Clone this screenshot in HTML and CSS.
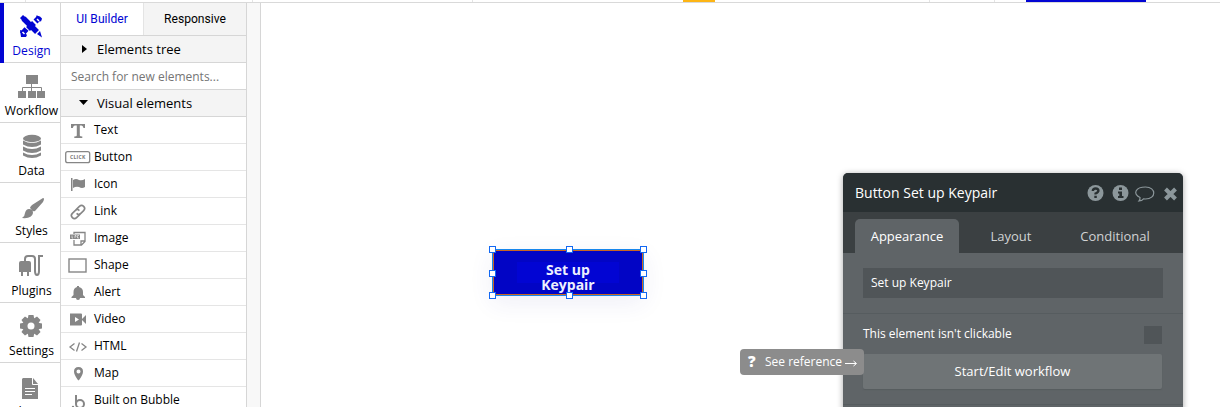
FILE: index.html
```html
<!DOCTYPE html>
<html lang="en">
<head>
<meta charset="utf-8">
<title>Editor</title>
<link rel="stylesheet" href="styles.css">
</head>
<body>
<header class="topbar"><i class="tick t1"></i><i class="tick t2"></i><i class="tick t3"></i><i class="mark orange"></i><i class="tick t4"></i><i class="tick t5"></i><i class="mark blue"></i></header>
<main class="editor">
  <nav class="sidebar">
    <div class="nav-item active"><svg width="60" height="36" viewBox="0 0 60 36"><path stroke="#0205d3" stroke-width="5.500" d="M23.500 15.500L37 29"/><path fill="#0205d3" d="M20 15l3-3 4 3.500-3.500 3.500zM37 31l3-3 2 6.500z"/><path stroke="#0205d3" stroke-width="5.500" d="M39.500 14.500l-4 4M34 20l-6 6M26.500 26l-4.500 5"/><path fill="#0205d3" d="M20 27l3 1 4 4-1 2h-5zM36 12.500l4 1 2 2-1 3-3-1z"/><path stroke="#fff" stroke-width="1.500" d="M22.500 29l2 2M37 16l2 2"/></svg><span>Design</span></div>
    <div class="nav-item"><svg width="60" height="36" viewBox="0 0 60 36"><path fill="#868686" d="M26 12h12v9H26zM18 28h8v7h-8zM28 28h8v7h-8zM37 28h8v7h-8z"/><path fill="none" stroke="#868686" d="M31.500 20v8M22.500 28v-3.500h19V28"/></svg><span>Workflow</span></div>
    <div class="nav-item"><svg width="60" height="36" viewBox="0 0 60 36"><g fill="#868686"><ellipse cx="32" cy="15.500" rx="9" ry="3.700"/><path d="M23 17.500q9 5 18 0v4q-9 5-18 0zM23 23.500q9 5 18 0v4q-9 5-18 0zM23 29.500q9 5 18 0v3q-9 5-18 0z"/></g></svg><span>Data</span></div>
    <div class="nav-item"><svg width="60" height="36" viewBox="0 0 60 36"><path fill="#868686" d="M43 15q2 0 0 4l-8 9q-2 1-3-1l-2-2q0-1 2-3zM29 26q4 0 4 4-1 6-11 5 3-2 3-5 1-4 4-4z"/></svg><span>Styles</span></div>
    <div class="nav-item"><svg width="60" height="36" viewBox="0 0 60 36"><path fill="#868686" d="M19 20q0-2 2-2h8q2 0 2 2v9H19zM21 29h2v4h-2zM27 29h2v4h-2z"/><path fill="none" stroke="#868686" stroke-width="2" d="M25 19v-3q0-3 3-3h4q3 0 3 3v12q0 4 2 4t2-4V13h4"/></svg><span>Plugins</span></div>
    <div class="nav-item"><svg width="60" height="36" viewBox="0 0 60 36"><g transform="translate(31 23)"><g fill="#868686"><circle r="8"/><path d="M-2.500-11h5l1 5h-7zM-2.500 11h5l1-5h-7zM-11-2.500v5l5 1v-7zM11-2.500v5l-5 1v-7z"/><path transform="rotate(45)" d="M-2.500-11h5l1 5h-7zM-2.500 11h5l1-5h-7zM-11-2.500v5l5 1v-7zM11-2.500v5l-5 1v-7z"/></g><circle r="3.500" fill="#fff"/></g></svg><span>Settings</span></div>
    <div class="nav-item"><svg width="60" height="36" viewBox="0 0 60 36"><path fill="#868686" d="M23 15h10l5 6v16H22V16z"/><path fill="none" stroke="#fff" d="M32.500 15v6.500H38M25 25.500h10M25 28.500h10M25 31.500h7"/></svg><span>Logs</span></div>
  </nav>
  <aside class="palette">
    <div class="tabs"><div class="tab on">UI Builder</div><div class="tab">Responsive</div></div>
    <div class="section"><svg class="tri" width="6" height="10"><path d="M0 1l5 4-5 4z"/></svg>Elements tree</div>
    <div class="search">Search for new elements...</div>
    <div class="section"><svg class="tri down" width="9" height="6"><path d="M0 0h9L4.500 5z"/></svg>Visual elements</div>
    <div class="row"><svg viewBox="0 0 34 26"><path fill="#868686" d="M10 7h14v4h-1.500q-.5-2.300-2-2.500h-1.700v10q0 1 2.500 1V21h-8v-1.500q2.500 0 2.500-1v-10h-2q-1.500.2-2 2.500H10z"/></svg>Text</div>
    <div class="row"><svg viewBox="0 0 34 26"><rect x="4.700" y="7.700" width="24" height="11" rx="2" fill="none" stroke="#868686" stroke-width="1.300"/><text class="click" x="16.800" y="15.400" text-anchor="middle">CLICK</text></svg>Button</div>
    <div class="row"><svg viewBox="0 0 34 26"><path fill="#868686" d="M10 7h1.500v13H10zM12 9q3-2 6 0 3 1 6-1v8q-3 2-6 0-3-1-6 1z"/></svg>Icon</div>
    <div class="row"><svg viewBox="0 0 34 26"><g transform="rotate(-45 17 14)" fill="none" stroke="#868686" stroke-width="1.600"><path d="M17 17h-5q-3 0-3-3t3-3h4q3 0 3 3"/><path d="M17 11h5q3 0 3 3t-3 3h-4q-3 0-3-3"/></g></svg>Link</div>
    <div class="row"><svg viewBox="0 0 34 26"><path fill="none" stroke="#868686" stroke-width="1.300" d="M13 9V7.500h11v9L20.500 20H13v-5M24 16h-4v4"/><path fill="#868686" d="M9 9.500h10V14H9z"/><path stroke="#fff" stroke-width=".6" fill="none" d="M11 10.500V13h1M14 13v-2.500h1V12M18 10.500h-1.500V13H18"/></svg>Image</div>
    <div class="row"><svg viewBox="0 0 34 26"><rect x="8" y="7" width="17" height="13" fill="none" stroke="#868686" stroke-width="1.400"/></svg>Shape</div>
    <div class="row"><svg viewBox="0 0 34 26"><path fill="#868686" d="M16 7h2v1q4 1 4 5v3l2 2v1H10.500v-1l2-2v-3q0-4 3.500-5zM15 19h4q0 2-2 2t-2-2z"/></svg>Alert</div>
    <div class="row"><svg viewBox="0 0 34 26"><path fill="#868686" d="M9 7.500h11q1 0 1 1v10q0 1-1 1H9zM21 13l4-4v9l-4-4z"/><path fill="#fff" d="M14 11l4 2.500-4 2.500z"/></svg>Video</div>
    <div class="row"><svg viewBox="0 0 34 26"><path fill="none" stroke="#868686" stroke-width="1.300" d="M13.500 10.500L9 14l4.500 3.500M20.500 10.500L25 14l-4.500 3.500M18.500 9.500l-3 9"/></svg>HTML</div>
    <div class="row"><svg viewBox="0 0 34 26"><path fill="#868686" fill-rule="evenodd" d="M17.500 7q4.500 0 4.500 4.500 0 3-3.500 8l-1 1-1-1Q13 14.500 13 11.500 13 7 17.500 7zm0 2.500a2 2 0 1 0 0 4 2 2 0 0 0 0-4z"/></svg>Map</div>
    <div class="row"><svg viewBox="0 0 34 26"><path stroke="#868686" stroke-width="2" fill="none" d="M15 8v9M15 17a4 4 0 1 0 8 0 4 4 0 0 0-8 0"/><circle cx="12" cy="20" r="1.200" fill="#868686"/></svg>Built on Bubble</div>
  </aside>
  <div class="gutter"></div>
  <section class="canvas">
    <div class="element"><div class="label">Set up<br>Keypair</div>
      <i class="h nw"></i><i class="h n"></i><i class="h ne"></i><i class="h w"></i><i class="h e"></i><i class="h sw"></i><i class="h s"></i><i class="h se"></i>
    </div>
    <div class="props">
      <div class="props-head"><span>Button Set up Keypair</span>
        <svg width="92" height="20" viewBox="0 0 92 20"><g fill="#8c979b"><circle cx="8.500" cy="10" r="8"/><circle cx="33.500" cy="10" r="8"/></g><path fill="none" stroke="#293032" stroke-width="2.400" d="M5.800 8q.2-2.500 2.800-2.500 2.800 0 2.800 2.300 0 1.500-2.800 2.700v1"/><path fill="#293032" d="M7.300 12.700h2.500v2.300H7.300zM32 4.500h3V7h-3zM31 8.500h4V13h1.500v2H31v-2h1.300v-2.500H31z"/><path fill="none" stroke="#8c979b" stroke-width="1.200" d="M53 14.500c-8-4-4-10.500 5.500-10.500 11 0 11 12 0 12l-2-.2q-1.500 2-4.500 2.200 1.300-1.500 1-3.500z"/><path stroke="#8c979b" stroke-width="4" d="M78.500 6l10 10M88.500 6l-10 10"/></svg>
      </div>
      <div class="props-tabs"><div class="ptab current">Appearance</div><div class="ptab">Layout</div><div class="ptab">Conditional</div></div>
      <div class="props-body">
        <div class="input">Set up Keypair</div>
        <div class="group">
          <div class="check-row"><span>This element isn't clickable</span><i class="check"></i></div>
          <div class="button">Start/Edit workflow</div>
        </div>
      </div>
    </div>
    <div class="tooltip"><b>?</b><span>See reference</span><svg width="13" height="8"><path d="M0 4.500h11M8.500 2l3 2.500-3 2.500" fill="none" stroke="#fff"/></svg></div>
  </section>
</main>
</body>
</html>
```
FILE: styles.css
```css
* { box-sizing: border-box; }
body { margin: 0; width: 1220px; height: 407px; overflow: hidden; background: #fff; color: #000; font-family: "Open Sans", sans-serif; font-size: 12px; }
svg { flex: none; display: block; }
.topbar { display: flex; height: 3px; border-bottom: 1px solid #d9d9d9; }
.tick { width: 1px; background: #e4e4e4; }
.t1 { margin-left: 25px; }
.t2 { margin-left: 226px; }
.t3 { margin-left: 219px; }
.mark.orange { margin-left: 210px; width: 32px; background: #fdb515; }
.t4 { margin-left: 214px; }
.t5 { margin-left: 64px; }
.mark.blue { margin-left: 31px; width: 120px; background: #0205d3; }
.editor { display: flex; height: 404px; overflow: hidden; }
.sidebar { width: 61px; border-right: 1px solid #d6d6d6; flex: none; }
.nav-item { height: 60px; border-bottom: 1px solid #d6d6d6; font-size: 12.1px; line-height: 18px; position: relative; }
.nav-item span { display: block; text-align: center; margin: 3px -1px 0 2px; }
.nav-item.active { color: #0205d3; }
.nav-item.active::before { content: ""; position: absolute; left: 0; top: 0; width: 4px; height: 60px; background: #0205d3; }
.palette { width: 186px; flex: none; border-right: 1px solid #d6d6d6; }
.tabs { display: flex; height: 33px; border-bottom: 1px solid #d6d6d6; font: 12.1px/32px Roboto, sans-serif; }
.tab { width: 102px; text-align: center; background: #f4f4f4; }
.tab.on { width: 83px; background: #fff; color: #0205d3; border-right: 1px solid #e4e4e4; }
.section, .search { height: 27px; border-bottom: 1px solid #d6d6d6; line-height: 26px; }
.section { display: flex; align-items: center; background: #f4f4f4; font-size: 13px; padding-left: 21px; }
.tri { margin-right: 9px; }
.tri.down { margin: 0 9px 0 -3px; }
.search { padding: 1px 0 0 10px; color: #757575; }
.row { display: flex; height: 27px; line-height: 26px; border-bottom: 1px solid #e5e5e5; }
.row svg { width: 34px; height: 26px; margin-right: -1px; }
.click { font: bold 5px "Open Sans", sans-serif; fill: #777; letter-spacing: .3px; }
.gutter { width: 14px; flex: none; background: #f8f8f8; border-right: 1px solid #d6d6d6; }
.canvas { flex: 1; position: relative; }
.element { position: absolute; left: 231px; top: 246px; width: 152px; height: 47px; background: #0205c5; border: 2px solid #c96620; outline: 1px solid #1787ed; outline-offset: -1px; box-shadow: 0 7px 24px rgba(50, 50, 150, .08); color: #fff; text-align: center; font-weight: 700; font-size: 14px; line-height: 15px; padding-top: 11px; }
.label { width: 102px; height: 21px; margin: 0 auto 0 23px; background: #0205d3; color: #eef0ff; }
.h { position: absolute; width: 7px; height: 7px; background: #fff; border: 1px solid #1268f3; }
.nw, .n, .ne { top: -5px; }
.w, .e { top: 19px; }
.sw, .s, .se { bottom: -5px; }
.nw, .w, .sw { left: -5px; }
.n, .s { left: 72px; }
.ne, .e, .se { right: -5px; }
.props { position: absolute; left: 582px; top: 170px; width: 340px; height: 300px; background: #5f6467; border-radius: 5px 5px 0 0; box-shadow: 0 1px 6px rgba(0,0,0,.35); color: #fff; overflow: hidden; }
.props-head { display: flex; align-items: center; justify-content: space-between; height: 39px; background: #293032; padding: 1px 4px 0 12px; font-size: 14px; }
.props-head span { margin-top: -2px; }
.props-tabs { display: flex; height: 41px; padding: 7px 12px 0; background: #3b4042; font-size: 13px; }
.ptab { width: 104px; text-align: center; line-height: 34px; color: #d1d3d4; }
.ptab.current { background: #5f6467; border-radius: 5px 5px 0 0; color: #fff; }
.props-body { padding-top: 15px; }
.input { margin: 0 20px 15px; height: 30px; background: #505558; line-height: 29px; padding-left: 8px; }
.group { border-top: 1px solid #565c5f; border-bottom: 1px solid #565c5f; height: 92px; padding: 12px 21px 0 20px; }
.check-row { display: flex; justify-content: space-between; height: 28px; line-height: 16px; }
.check { width: 18px; height: 18px; background: #505558; }
.button { height: 35px; background: #6f7476; border-radius: 2px; text-align: center; line-height: 34px; font-size: 13px; box-shadow: 0 1px 1px #575c5f; }
.tooltip { position: absolute; left: 479px; top: 346px; width: 124px; height: 26px; background: #8c8c8c; border-radius: 4px; color: #fff; display: flex; align-items: center; padding: 0 0 1px 8px; }
.tooltip b { width: 17px; font-size: 15px; font-weight: 800; line-height: 22px; margin-top: -2px; }
.tooltip svg { margin: 3px 0 0 3px; }
```
